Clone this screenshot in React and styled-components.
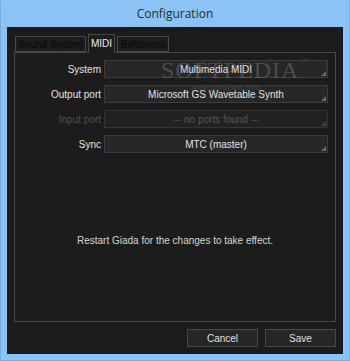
import React from "react";
import styled, { createGlobalStyle } from "styled-components";

const Global = createGlobalStyle`
  html, body { margin: 0; padding: 0; background: #8bc4f4; }
  * { box-sizing: border-box; }
`;

const Window = styled.div`
  position: relative;
  width: 350px;
  height: 361px;
  border: 1px solid #74afe3;
  border-top-color: #8bc4f4;
  padding: 0 6px 6px;
  display: flex;
  flex-direction: column;
  background: #8bc4f4;
  font-family: "Liberation Sans", Arial, sans-serif;
`;

const TitleBar = styled.div`
  height: 26px;
  display: flex;
  align-items: center;
  justify-content: center;
  font-family: "Open Sans", "Noto Sans", sans-serif;
  font-size: 12px;
  color: #2a2a2a;
  padding-bottom: 1px;
`;

const Client = styled.div`
  flex: 1;
  background: #1c1c1c;
  padding: 7px 7px 7px 7px;
  display: flex;
  flex-direction: column;
`;

const TabRow = styled.div`
  height: 18px;
  display: flex;
  align-items: flex-end;
  gap: 2px;
  padding-left: 1px;
  position: relative;
  z-index: 1;
`;

const Tab = styled.div`
  height: ${(p) => (p.$active ? "19px" : "16px")};
  margin-bottom: ${(p) => (p.$active ? "-1px" : "0")};
  width: ${(p) => p.$w}px;
  border: 1px solid #474747;
  border-bottom: ${(p) => (p.$active ? "none" : "1px solid #474747")};
  background: #1c1c1c;
  color: ${(p) => (p.$active ? "#ececec" : "#0a0a0a")};
  font-size: 10px;
  display: flex;
  align-items: center;
  justify-content: center;
  padding-bottom: ${(p) => (p.$active ? "2px" : "0")};
`;

const Panel = styled.div`
  flex: 1;
  border: 1px solid #474747;
  padding: 7px 6px 0 0;
  display: flex;
  flex-direction: column;
`;

const Form = styled.div`
  display: grid;
  grid-template-columns: 86px 224px;
  column-gap: 3px;
  row-gap: 7px;
`;

const Label = styled.div`
  height: 18px;
  display: flex;
  align-items: center;
  justify-content: flex-end;
  font-size: 10px;
  color: ${(p) => (p.$disabled ? "#4f4f4f" : "#e2e2e2")};
`;

const Field = styled.div`
  position: relative;
  height: 18px;
  border: 1px solid ${(p) => (p.$disabled ? "#333" : "#3c3c3c")};
  background: ${(p) => (p.$disabled ? "#222" : "#272727")};
  color: ${(p) => (p.$disabled ? "#555" : "#e2e2e2")};
  font-size: 10px;
  display: flex;
  align-items: center;
  justify-content: center;
  &::after {
    content: "";
    position: absolute;
    right: 1px;
    bottom: 1px;
    width: 0;
    height: 0;
    border-left: 5px solid transparent;
    border-bottom: 5px solid ${(p) => (p.$disabled ? "#444" : "#6a6a6a")};
  }
`;

const Message = styled.div`
  margin-top: 82px;
  padding-left: 6px;
  text-align: center;
  font-size: 10px;
  line-height: 12px;
  color: #d6d6d6;
`;

const ButtonRow = styled.div`
  margin-top: 7px;
  display: flex;
  justify-content: flex-end;
  gap: 7px;
`;

const Button = styled.div`
  width: 71px;
  height: 18px;
  border: 1px solid #474747;
  background: #262626;
  color: #e0e0e0;
  font-size: 10px;
  display: flex;
  align-items: center;
  justify-content: center;
`;

const Watermark = styled.div`
  position: absolute;
  left: 160px;
  top: 56px;
  font-family: "Liberation Serif", "DejaVu Serif", serif;
  font-size: 24px;
  letter-spacing: 1px;
  color: rgba(170, 170, 170, 0.28);
  pointer-events: none;
  sup {
    font-size: 7px;
    vertical-align: top;
    margin-left: 2px;
  }
`;

const WatermarkUrl = styled.div`
  position: absolute;
  left: 190px;
  top: 82px;
  font-size: 8px;
  color: rgba(170, 170, 170, 0.22);
  pointer-events: none;
`;

const rows = [
  { label: "System", value: "Multimedia MIDI" },
  { label: "Output port", value: "Microsoft GS Wavetable Synth" },
  { label: "Input port", value: "-- no ports found --", disabled: true },
  { label: "Sync", value: "MTC (master)" },
];

export default function App() {
  return (
    <>
      <Global />
      <Window>
        <TitleBar>Configuration</TitleBar>
        <Client>
          <TabRow>
            <Tab $w={71}>Sound System</Tab>
            <Tab $w={27} $active>MIDI</Tab>
            <Tab $w={52}>Behaviors</Tab>
          </TabRow>
          <Panel>
            <Form>
              {rows.map((r) => (
                <React.Fragment key={r.label}>
                  <Label $disabled={r.disabled}>{r.label}</Label>
                  <Field $disabled={r.disabled}>{r.value}</Field>
                </React.Fragment>
              ))}
            </Form>
            <Message>Restart Giada for the changes to take effect.</Message>
          </Panel>
          <ButtonRow>
            <Button>Cancel</Button>
            <Button>Save</Button>
          </ButtonRow>
        </Client>
        <Watermark>
          SOFTPEDIA<sup>™</sup>
        </Watermark>
        <WatermarkUrl>www.softpedia.com</WatermarkUrl>
      </Window>
    </>
  );
}
